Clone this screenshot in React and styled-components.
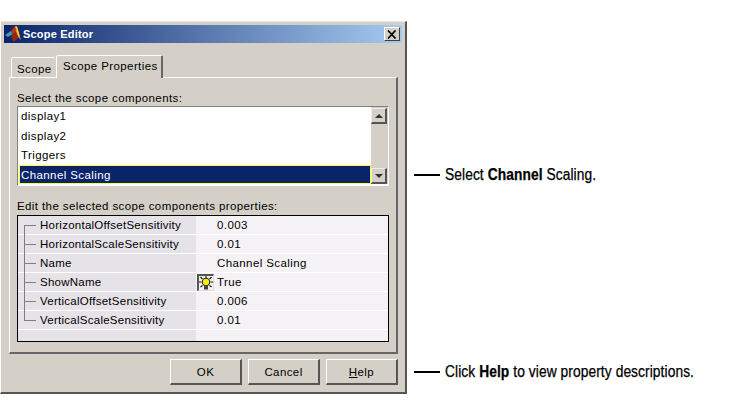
import React from 'react';
import styled, { createGlobalStyle } from 'styled-components';

const GlobalStyle = createGlobalStyle`
  html, body {
    margin: 0;
    background: #fff;
  }
  * {
    box-sizing: border-box;
  }
`;

const Page = styled.div`
  display: flex;
  align-items: flex-start;
  width: 750px;
  height: 404px;
  padding-top: 21px;
  overflow: hidden;
  font-family: "Liberation Sans", Arial, sans-serif;
  font-size: 11.5px;
  letter-spacing: 0.4px;
  color: #000;
`;

const Dialog = styled.div`
  width: 407px;
  height: 373px;
  padding: 4px 3px 3px 4px;
  background: #d4d0c8;
  border-top: 1px solid #e8e6e0;
  border-left: 1px solid #fff;
  border-right: 2px solid #555;
  border-bottom: 2px solid #555;
  display: flex;
  flex-direction: column;
`;

const TitleBar = styled.div`
  height: 18px;
  flex: none;
  margin: -1px 0 0 -1px;
  padding: 0 2px 0 1px;
  display: flex;
  align-items: center;
  gap: 1px;
  background: linear-gradient(90deg, #0a246a, #a6caf0);
`;

const TitleText = styled.div`
  flex: 1;
  font-size: 11px;
  font-weight: bold;
  letter-spacing: 0.2px;
  color: #fff;
`;

const CloseButton = styled.div`
  width: 16px;
  height: 14px;
  display: flex;
  align-items: center;
  justify-content: center;
  background: #d4d0c8;
  border-top: 1px solid #fff;
  border-left: 1px solid #fff;
  border-right: 1px solid #404040;
  border-bottom: 1px solid #404040;
`;

const TabStrip = styled.div`
  height: 34px;
  flex: none;
  display: flex;
  align-items: flex-end;
  padding-left: 6px;
  position: relative;
  z-index: 1;
`;

const Tab = styled.div`
  height: ${p => (p.$active ? '23px' : '20px')};
  width: ${p => (p.$active ? '107px' : '45px')};
  margin-bottom: ${p => (p.$active ? '-1px' : '0')};
  padding: ${p => (p.$active ? '4px 0 0 6px' : '5px 0 0 5px')};
  background: #d4d0c8;
  border-top: 1px solid #fff;
  border-left: 1px solid #fff;
  border-right: 2px solid ${p => (p.$active ? '#666' : '#d4d0c8')};
  border-radius: 2px 2px 0 0;
`;

const TabPanel = styled.div`
  height: 277px;
  flex: none;
  margin-left: 4px;
  margin-right: 4px;
  padding: 13px 7px 0 7px;
  border-top: 1px solid #fff;
  border-left: 1px solid #fff;
  border-right: 2px solid #666;
  border-bottom: 2px solid #666;
`;

const FieldLabel = styled.div`
  height: 15px;
  line-height: 15px;
  margin-top: ${p => p.$top || 0}px;
  margin-bottom: ${p => p.$gap || 0}px;
`;

const ListFrame = styled.div`
  height: 80px;
  display: flex;
  padding-bottom: 1px;
  background: #fff;
  border-top: 1px solid #808080;
  border-left: 1px solid #808080;
  border-right: 1px solid #fff;
  border-bottom: 1px solid #fff;
`;

const ListBody = styled.div`
  flex: 1;
  display: flex;
  flex-direction: column;
  justify-content: flex-end;
`;

const ListItem = styled.div`
  height: 19.5px;
  line-height: 18px;
  margin-left: 1px;
  padding-left: 1px;
  color: ${p => (p.$selected ? '#fff' : '#000')};
  background: ${p => (p.$selected ? '#0a246a' : 'transparent')};
  border: 1px solid ${p => (p.$selected ? '#ffff33' : 'transparent')};
`;

const ScrollBar = styled.div`
  width: 17px;
  display: flex;
  flex-direction: column;
  justify-content: space-between;
  padding-top: 1px;
  background: #d4d0c8;
`;

const ScrollButton = styled.div`
  width: 16px;
  height: 16px;
  display: flex;
  align-items: center;
  justify-content: center;
  background: #d4d0c8;
  border-top: 1px solid #eee;
  border-left: 1px solid #eee;
  border-right: 2px solid #555;
  border-bottom: 2px solid #555;
`;

const Arrow = styled.div`
  width: 0;
  height: 0;
  border-left: 4px solid transparent;
  border-right: 4px solid transparent;
  ${p => (p.$down ? 'border-top: 4px solid #333;' : 'border-bottom: 4px solid #333;')}
`;

const PropertyTable = styled.div`
  height: 127px;
  display: flex;
  flex-direction: column;
  border: 1px solid #000;
  background: #f5f2f6;
`;

const PropertyRow = styled.div`
  height: 19px;
  flex: none;
  display: flex;
  border-bottom: 1px solid #fff;
`;

const FillerRow = styled.div`
  flex: 1;
  display: flex;
`;

const NameCell = styled.div`
  width: 178px;
  flex: none;
  display: flex;
  align-items: center;
  letter-spacing: 0.26px;
  background: #e6e3e8;
`;

const Branch = styled.span`
  width: 12px;
  height: 1px;
  margin: 0 4px 0 6px;
  flex: none;
  background: #808080;
  position: relative;
  &::before {
    content: "";
    position: absolute;
    left: 0;
    top: ${p => (p.$first ? '0' : '-10px')};
    height: ${p => (p.$first || p.$last ? '10px' : '19px')};
    width: 1px;
    background: #808080;
  }
`;

const ValueCell = styled.div`
  flex: 1;
  display: flex;
  align-items: center;
  padding-left: ${p => (p.$icon ? '1px' : '21px')};
  gap: 3px;
`;

const BulbButton = styled.div`
  width: 17px;
  height: 17px;
  display: flex;
  align-items: center;
  justify-content: center;
  background: #f4f2ee;
  border-top: 2px solid #555;
  border-left: 2px solid #555;
  border-right: 1px solid #ddd;
  border-bottom: 1px solid #ddd;
`;

const ButtonRow = styled.div`
  display: flex;
  justify-content: flex-end;
  gap: 6px;
  margin-top: 5px;
  margin-right: 4px;
`;

const Button = styled.div`
  width: 72px;
  height: 26px;
  display: flex;
  align-items: center;
  justify-content: center;
  background: #d4d0c8;
  border-top: 1px solid #fff;
  border-left: 1px solid #fff;
  border-right: 2px solid #555;
  border-bottom: 2px solid #555;
`;

const Mnemonic = styled.span`
  text-decoration: underline;
`;

const Callouts = styled.div`
  margin-left: 7px;
  padding-top: 144px;
  display: flex;
  flex-direction: column;
  gap: 177px;
`;

const Callout = styled.div`
  height: 20px;
  display: flex;
  align-items: center;
  gap: 5px;
  font-size: 16px;
  letter-spacing: 0.1px;
  color: #000;
  white-space: nowrap;
`;

const CalloutText = styled.span`
  display: inline-block;
  transform: scaleX(0.86);
  transform-origin: left center;
  -webkit-text-stroke: 0.25px #000;
`;

const Leader = styled.div`
  width: 26px;
  height: 2px;
  background: #000;
`;

const Strong = styled.b`
  font-weight: bold;
`;

function MatlabIcon() {
  return (
    <svg width="17" height="16" viewBox="0 0 17 16">
      <polygon points="0,9 6,5 8,8 3,11" fill="#3f9fb0" />
      <polygon points="6,5 10,0 11,6 8,10" fill="#b8321a" />
      <polygon points="10,0 12,0 16,14 13,11 11,6" fill="#f08a1c" />
      <polygon points="8,8 11,6 13,12 9,16 6,11" fill="#8c2a14" />
      <polygon points="11,1 12,1 15,11 13,9" fill="#ffd040" />
    </svg>
  );
}

function CloseIcon() {
  return (
    <svg width="10" height="9" viewBox="0 0 10 9">
      <path d="M1 0.5 L8.5 8.5 M8.5 0.5 L1 8.5" stroke="#000" strokeWidth="1.7" fill="none" />
    </svg>
  );
}

function BulbIcon() {
  return (
    <svg width="14" height="14" viewBox="0 0 14 14">
      <path d="M7 0v2M1.5 1l2 2M12.5 1l-2 2M0 6h2.5M11.5 6H14M1.5 11l2-1.5M12.5 11l-2-1.5" stroke="#111" strokeWidth="1.1" fill="none" />
      <circle cx="7" cy="6" r="3.7" fill="#f8f000" stroke="#222" strokeWidth="1.1" />
      <rect x="5" y="9.5" width="4" height="4" fill="#444" />
    </svg>
  );
}

const properties = [
  { name: 'HorizontalOffsetSensitivity', value: '0.003' },
  { name: 'HorizontalScaleSensitivity', value: '0.01' },
  { name: 'Name', value: 'Channel Scaling' },
  { name: 'ShowName', value: 'True', icon: true },
  { name: 'VerticalOffsetSensitivity', value: '0.006' },
  { name: 'VerticalScaleSensitivity', value: '0.01' },
];

const components = ['display1', 'display2', 'Triggers', 'Channel Scaling'];

export default function App() {
  return (
    <Page>
      <GlobalStyle />
      <Dialog>
        <TitleBar>
          <MatlabIcon />
          <TitleText>Scope Editor</TitleText>
          <CloseButton><CloseIcon /></CloseButton>
        </TitleBar>
        <TabStrip>
          <Tab>Scope</Tab>
          <Tab $active>Scope Properties</Tab>
        </TabStrip>
        <TabPanel>
          <FieldLabel>Select the scope components:</FieldLabel>
          <ListFrame>
            <ListBody>
              {components.map((item, i) => (
                <ListItem key={item} $selected={i === components.length - 1}>{item}</ListItem>
              ))}
            </ListBody>
            <ScrollBar>
              <ScrollButton><Arrow /></ScrollButton>
              <ScrollButton><Arrow $down /></ScrollButton>
            </ScrollBar>
          </ListFrame>
          <FieldLabel $top={13} $gap={1}>Edit the selected scope components properties:</FieldLabel>
          <PropertyTable>
            {properties.map((prop, i) => (
              <PropertyRow key={prop.name}>
                <NameCell>
                  <Branch $first={i === 0} $last={i === properties.length - 1} />
                  {prop.name}
                </NameCell>
                <ValueCell $icon={prop.icon}>
                  {prop.icon && <BulbButton><BulbIcon /></BulbButton>}
                  {prop.value}
                </ValueCell>
              </PropertyRow>
            ))}
            <FillerRow>
              <NameCell />
              <ValueCell />
            </FillerRow>
          </PropertyTable>
        </TabPanel>
        <ButtonRow>
          <Button>OK</Button>
          <Button>Cancel</Button>
          <Button><span><Mnemonic>H</Mnemonic>elp</span></Button>
        </ButtonRow>
      </Dialog>
      <Callouts>
        <Callout>
          <Leader />
          <CalloutText>Select <Strong>Channel</Strong> Scaling.</CalloutText>
        </Callout>
        <Callout>
          <Leader />
          <CalloutText>Click <Strong>Help</Strong> to view property descriptions.</CalloutText>
        </Callout>
      </Callouts>
    </Page>
  );
}
